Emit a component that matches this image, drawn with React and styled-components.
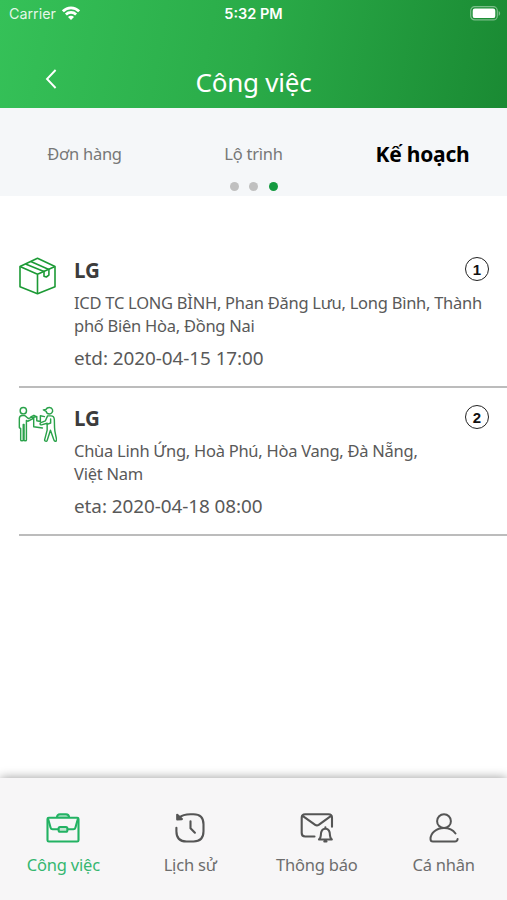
import React from "react";
import styled, { createGlobalStyle } from "styled-components";

const stops = [
  {
    order: 1,
    name: "LG",
    address: ["ICD TC LONG BÌNH, Phan Đăng Lưu, Long Bình, Thành", "phố Biên Hòa, Đồng Nai"],
    time: "etd: 2020-04-15 17:00",
    icon: <BoxIcon />,
  },
  {
    order: 2,
    name: "LG",
    address: ["Chùa Linh Ứng, Hoà Phú, Hòa Vang, Đà Nẵng,", "Việt Nam"],
    time: "eta: 2020-04-18 08:00",
    icon: <DeliveryIcon />,
  },
];

function App() {
  return (
    <Screen>
      <GlobalStyle />
      <Header>
        <StatusBar>
          <Carrier>
            Carrier
            <WifiIcon />
          </Carrier>
          <Clock>5:32 PM</Clock>
          <BatteryIcon />
        </StatusBar>
        <TitleRow>
          <BackButton aria-label="Back">
            <svg width="12" height="20" viewBox="0 0 12 20" fill="none" stroke="#fff" strokeWidth="1.9">
              <path d="M10.600 1 2 10l8.600 9" />
            </svg>
          </BackButton>
          <Title>Công việc</Title>
        </TitleRow>
      </Header>
      <Tabs>
        <TabRow>
          <Tab>Đơn hàng</Tab>
          <Tab>Lộ trình</Tab>
          <Tab $active>Kế hoạch</Tab>
        </TabRow>
        <Dots>
          <Dot />
          <Dot />
          <Dot $active />
        </Dots>
      </Tabs>
      <List>
        {stops.map((stop) => (
          <Stop key={stop.order}>
            <StopIcon>{stop.icon}</StopIcon>
            <StopBody>
              <Name>{stop.name}</Name>
              <Address>
                {stop.address.map((line) => (
                  <span key={line}>{line}</span>
                ))}
              </Address>
              <Time>{stop.time}</Time>
            </StopBody>
            <Order>{stop.order}</Order>
          </Stop>
        ))}
      </List>
      <BottomNav>
        <NavItem $active>
          <BriefcaseIcon />
          <span>Công việc</span>
        </NavItem>
        <NavItem>
          <HistoryIcon />
          <span>Lịch sử</span>
        </NavItem>
        <NavItem>
          <MailBellIcon />
          <span>Thông báo</span>
        </NavItem>
        <NavItem>
          <PersonIcon />
          <span>Cá nhân</span>
        </NavItem>
      </BottomNav>
    </Screen>
  );
}

function WifiIcon() {
  return (
    <svg width="18" height="14" viewBox="0 0 18 14" fill="none" stroke="#fff" strokeWidth="2.7">
      <path d="M.9 5.300C5.400.7 12.600.7 17.100 5.300" />
      <path d="M3.900 8.500c2.800-2.800 7.400-2.800 10.200 0" />
      <path d="M9 13.900 6 10.900c1.500-1.500 4.500-1.500 6 0z" fill="#fff" stroke="none" />
    </svg>
  );
}

function BatteryIcon() {
  return (
    <svg width="31" height="15" viewBox="0 0 31 15">
      <rect x=".7" y=".7" width="26.600" height="13.200" rx="4" fill="none" stroke="#fff" strokeOpacity=".42" strokeWidth="1.200" />
      <rect x="2.700" y="2.500" width="22.600" height="9.600" rx="2.200" fill="#fff" />
      <path d="M28.700 5v4.800c1.900-.8 1.900-4 0-4.800z" fill="#fff" fillOpacity=".42" />
    </svg>
  );
}

function BoxIcon() {
  return (
    <svg width="38" height="38" viewBox="-1 0 38 38" fill="none" stroke="#1c9a35" strokeWidth="1.600" strokeLinejoin="round">
      <path d="M1 9.500 18.500 1.200 36 9.500v20.300l-17.500 7L1 29.800z" />
      <path d="M1 9.500l17.500 7.700L36 9.500M18.500 17.200v19.600" />
      <path d="M6.500 7 25 14.600v4.600l2.300.8 2.600-1.900v-5.700L11.800 4.600" />
    </svg>
  );
}

function DeliveryIcon() {
  return (
    <svg width="39" height="37" viewBox="0 -1 38 36" fill="none" stroke="#2aa24a" strokeWidth="1.400" strokeLinejoin="round" strokeLinecap="round">
      <circle cx="5.200" cy="4.500" r="3.100" />
      <path d="M1.300 12.200c0-2 1.300-3 3-3h1.500c1.200 0 1.800.6 2.500 1.500l1.700 1.500 3.700-1.400 1 1.500-5.200 2.500-1.300-.8v19c0 1.200-2.300 1.200-2.300 0V18h-.8v15c0 1.200-2.500 1.200-2.500 0V22l-1.300-1z" />
      <path d="M15.300 11v9.200l8.500 1.200M15.300 11l3-.8v4.200l3.500.6V9.500l4 .8M12.500 10.500l3-1.500 1.500.8" />
      <path d="M27.300 3.200c1.200-2.600 5.500-2.500 6.300.3.700 2.300-1 4.200-3 4.200-1.900 0-3-1.200-3.100-2.600l-2.800-1.400z" />
      <path d="M28.800 9.600h3.300c2 0 3.200 1.300 3.300 3.500l.2 7.800c.1 5 1.600 8.500 2 12 .2 1.500-2 2-2.500.5l-3.500-9.800-3.200 9.900c-.5 1.400-2.900.8-2.400-.8l2.400-9.200v-6.800l-5.600 1.600c-1.400.3-1.800-1.500-.5-2.100l4.300-1.700z" />
      <path d="M31.800 12.500v4l-3.400 1.300" />
    </svg>
  );
}

function BriefcaseIcon() {
  return (
    <svg width="34" height="30" viewBox="0 0 34 30" fill="none" stroke="currentColor" strokeWidth="2.100" strokeLinejoin="round">
      <rect x="1.500" y="4.800" width="31" height="23.700" rx="1.300" />
      <path d="M10.900 4.800C11 2.200 12 1.300 14 1.300h6c2 0 3 .9 3.200 3.500" fill="currentColor" fillOpacity=".35" />
      <path d="M2 5.500l2.600 9.300c.3 1 1 1.500 2 1.500h6M32 5.500l-2.600 9.300c-.3 1-1 1.500-2 1.500h-6" />
      <rect x="12.600" y="14" width="8.800" height="4.700" rx="1.500" fill="currentColor" fillOpacity=".25" />
    </svg>
  );
}

function HistoryIcon() {
  return (
    <svg width="30" height="30" viewBox="0 0 30 30" fill="none" stroke="currentColor" strokeWidth="2.100" strokeLinecap="round" strokeLinejoin="round">
      <path d="M4.500 4.500C7 2 10.500 1.300 15.500 1.300h3c6.500 0 10 3.500 10 10v7c0 6.700-3.500 10.200-10 10.200h-7c-7 0-10.100-3.500-10.100-10.200v-3.500" />
      <path d="M2.200 1.800v4.700l4.700-.4z" fill="currentColor" />
      <path d="M15.500 8.300v6.900l4.400 4.500" />
    </svg>
  );
}

function MailBellIcon() {
  return (
    <svg width="34" height="30" viewBox="0 0 34 30" fill="none" stroke="currentColor" strokeWidth="2.100" strokeLinecap="round" strokeLinejoin="round">
      <path d="M14.500 23.500H5.200c-2.200 0-3.500-1.300-3.500-3.500V4.800c0-2.200 1.300-3.500 3.500-3.500h23.300c2.200 0 3.500 1.300 3.500 3.500v9" />
      <path d="M2.600 2.800l12.600 9c1.300.9 2.200.9 3.500 0l12.400-9" />
      <path d="M19 26.500h12.800c-1.200-1.300-1.800-2.300-1.800-4 0-4-1.300-6.800-4.600-6.800s-4.600 2.800-4.600 6.800c0 1.700-.6 2.700-1.800 4zM24.300 28.500h2.200M25.400 14.300v1" />
    </svg>
  );
}

function PersonIcon() {
  return (
    <svg width="30" height="30" viewBox="0 0 30 30" fill="none" stroke="currentColor" strokeWidth="2" strokeLinecap="round">
      <circle cx="15" cy="8.200" r="6.900" />
      <path d="M26.500 20.500C24 17 20 15 15 15 7.500 15 1.500 20 1.500 26c0 1.600.8 2.500 2.500 2.500h21.800c1.800 0 2.700-.9 2.800-2.500" />
    </svg>
  );
}

const GlobalStyle = createGlobalStyle`
  * {
    box-sizing: border-box;
  }
  body {
    margin: 0;
    background: #fff;
    font-family: "Noto Sans", "Open Sans", sans-serif;
  }
`;

const Screen = styled.div`
  display: flex;
  flex-direction: column;
  width: 507px;
  height: 900px;
  overflow: hidden;
  background: #fff;
`;

const Header = styled.header`
  height: 108px;
  flex-shrink: 0;
  background: linear-gradient(100deg, #35c158 0%, #2aab48 50%, #1a8a33 100%);
  color: #fff;
`;

const StatusBar = styled.div`
  display: grid;
  grid-template-columns: 1fr auto 1fr;
  align-items: center;
  height: 27px;
  padding: 0 6px 0 9px;
  font-family: Inter, sans-serif;
  font-size: 14.500px;
  > svg {
    justify-self: end;
  }
`;

const Carrier = styled.div`
  display: flex;
  align-items: center;
  gap: 6px;
  font-size: 14.300px;
  color: rgba(255, 255, 255, 0.88);
  svg {
    margin-top: -2px;
  }
`;

const Clock = styled.div`
  margin-left: -3px;
  font-weight: 600;
`;

const TitleRow = styled.div`
  display: grid;
  grid-template-columns: 60px 1fr 60px;
  height: 80px;
`;

const BackButton = styled.button`
  display: flex;
  justify-content: flex-end;
  align-items: flex-start;
  padding: 42px 3px 0 0;
  border: none;
  background: none;
`;

const Title = styled.h1`
  margin: 0;
  padding-top: 38px;
  text-align: center;
  font-size: 26px;
  line-height: 35px;
  letter-spacing: -0.25px;
  font-weight: 400;
`;

const Tabs = styled.div`
  height: 88px;
  flex-shrink: 0;
  background: #f5f7f9;
`;

const TabRow = styled.div`
  display: grid;
  grid-template-columns: repeat(3, 1fr);
  height: 73.500px;
  padding-top: 31px;
`;

const Tab = styled.div`
  text-align: center;
  line-height: 30px;
  font-size: ${(p) => (p.$active ? "21px" : "16.500px")};
  font-weight: ${(p) => (p.$active ? 700 : 400)};
  letter-spacing: -0.25px;
  color: ${(p) => (p.$active ? "#000" : "#777")};
`;

const Dots = styled.div`
  display: flex;
  justify-content: center;
  gap: 10.500px;
`;

const Dot = styled.span`
  width: 9px;
  height: 9px;
  border-radius: 50%;
  background: ${(p) => (p.$active ? "#149a40" : "#c0c0c0")};
`;

const List = styled.main`
  flex: 1;
  padding: 44px 0 0 19px;
`;

const Stop = styled.div`
  display: flex;
  height: 148px;
  padding-top: 16px;
  border-bottom: 2px solid #bcbcbc;
`;

const StopIcon = styled.div`
  width: 56px;
  margin: 1px 0 0 -1px;
  flex-shrink: 0;
`;

const StopBody = styled.div`
  flex: 1;
  min-width: 0;
  color: #595959;
`;

const Name = styled.div`
  font-size: 20.500px;
  line-height: 28px;
  font-weight: 700;
  color: #3c3c3c;
`;

const Address = styled.div`
  margin-top: 8px;
  font-size: 16.500px;
  line-height: 22.500px;
  letter-spacing: -0.26px;
  span {
    display: block;
    white-space: nowrap;
  }
`;

const Time = styled.div`
  margin-top: 8px;
  font-size: 18.900px;
  line-height: 26px;
  letter-spacing: -0.06px;
`;

const Order = styled.div`
  display: flex;
  align-items: center;
  justify-content: center;
  flex-shrink: 0;
  width: 24px;
  height: 24px;
  margin: 1px 18px 0 0;
  border: 1.500px solid #222;
  border-radius: 50%;
  font: bold 15px "Liberation Sans", Arial, sans-serif;
  color: #111;
`;

const BottomNav = styled.nav`
  display: grid;
  grid-template-columns: repeat(4, 1fr);
  height: 122px;
  flex-shrink: 0;
  background: #f7f6f7;
  box-shadow: 0 0 10px rgba(0, 0, 0, 0.4);
`;

const NavItem = styled.div`
  display: flex;
  flex-direction: column;
  align-items: center;
  padding-top: 35px;
  color: ${(p) => (p.$active ? "#23b263" : "#555")};
  span {
    margin-top: 9px;
    font-size: 16.500px;
    line-height: 26px;
    letter-spacing: -0.2px;
    color: ${(p) => (p.$active ? "#35b770" : "#6d6d6d")};
  }
`;

export default App;
